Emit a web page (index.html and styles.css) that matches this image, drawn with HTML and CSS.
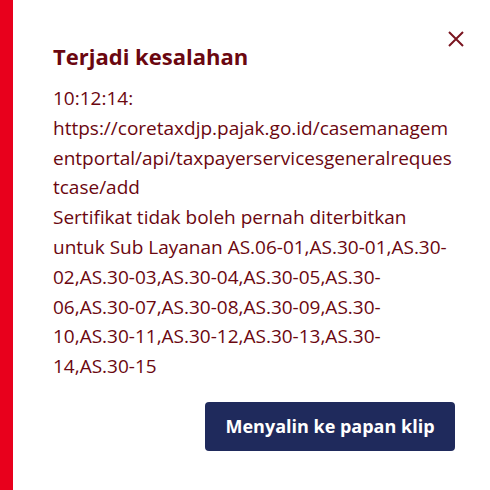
FILE: index.html
```html
<!DOCTYPE html>
<html lang="id">
<head>
    <meta charset="UTF-8">
    <meta name="viewport" content="width=device-width, initial-scale=1.0">
    <title>Terjadi kesalahan</title>
    <link rel="stylesheet" href="styles.css">
</head>
<body>
    <div class="toast">
        <div class="toast-bar"></div>
        <div class="toast-body">
            <div class="toast-head">
                <h1 class="toast-title">Terjadi kesalahan</h1>
                <button class="toast-close" type="button" aria-label="Tutup">
                    <svg width="16" height="16" viewBox="0 0 16 16">
                        <path d="M1 1 L15 15 M15 1 L1 15" stroke="currentColor" stroke-width="2" fill="none"/>
                    </svg>
                </button>
            </div>
            <p class="toast-msg">10:12:14: https://coretaxdjp.pajak.go.id/casemanagementportal/api/taxpayerservicesgeneralrequestcase/add<br>Sertifikat tidak boleh pernah diterbitkan untuk Sub Layanan AS.06-01,AS.30-01,AS.30-02,AS.30-03,AS.30-04,AS.30-05,AS.30-06,AS.30-07,AS.30-08,AS.30-09,AS.30-10,AS.30-11,AS.30-12,AS.30-13,AS.30-14,AS.30-15</p>
            <div class="toast-actions">
                <button class="copy-btn" type="button">Menyalin ke papan klip</button>
            </div>
        </div>
    </div>
</body>
</html>
```

FILE: styles.css
```css
body {
    margin: 0;
    padding: 0;
    background: #ffffff;
    font-family: "Open Sans", "Noto Sans", sans-serif;
}
.toast {
    display: flex;
    height: 490px;
    width: 490px;
}
.toast-bar {
    width: 13px;
    background-color: #e8001c;
    flex-shrink: 0;
}
.toast-body {
    flex: 1;
    padding: 24px 31.5px 0 40px;
    min-width: 0;
}
.toast-head {
    display: flex;
    justify-content: space-between;
    align-items: flex-start;
}
.toast-title {
    margin: 18px 0 0 0;
    font-size: 22px;
    font-weight: bold;
    color: #6b0710;
    line-height: 28px;
}
.toast-close {
    background: none;
    border: none;
    padding: 0;
    margin: 7px -5.5px 0 0;
    color: #7a1520;
    cursor: pointer;
    width: 16px;
    height: 16px;
}
.toast-msg {
    margin: 14px 0 0 0;
    font-size: 19px;
    line-height: 29.8px;
    color: #6b0710;
    overflow-wrap: break-word;
}
.toast-actions {
    display: flex;
    justify-content: flex-end;
    margin-top: 20px;
    padding-right: 3.5px;
}
.copy-btn {
    background-color: #1f2a5c;
    color: #ffffff;
    border: none;
    border-radius: 4px;
    font-family: "Open Sans", "Noto Sans", sans-serif;
    font-size: 18px;
    font-weight: bold;
    width: 250px;
    height: 49px;
    cursor: pointer;
}
```
